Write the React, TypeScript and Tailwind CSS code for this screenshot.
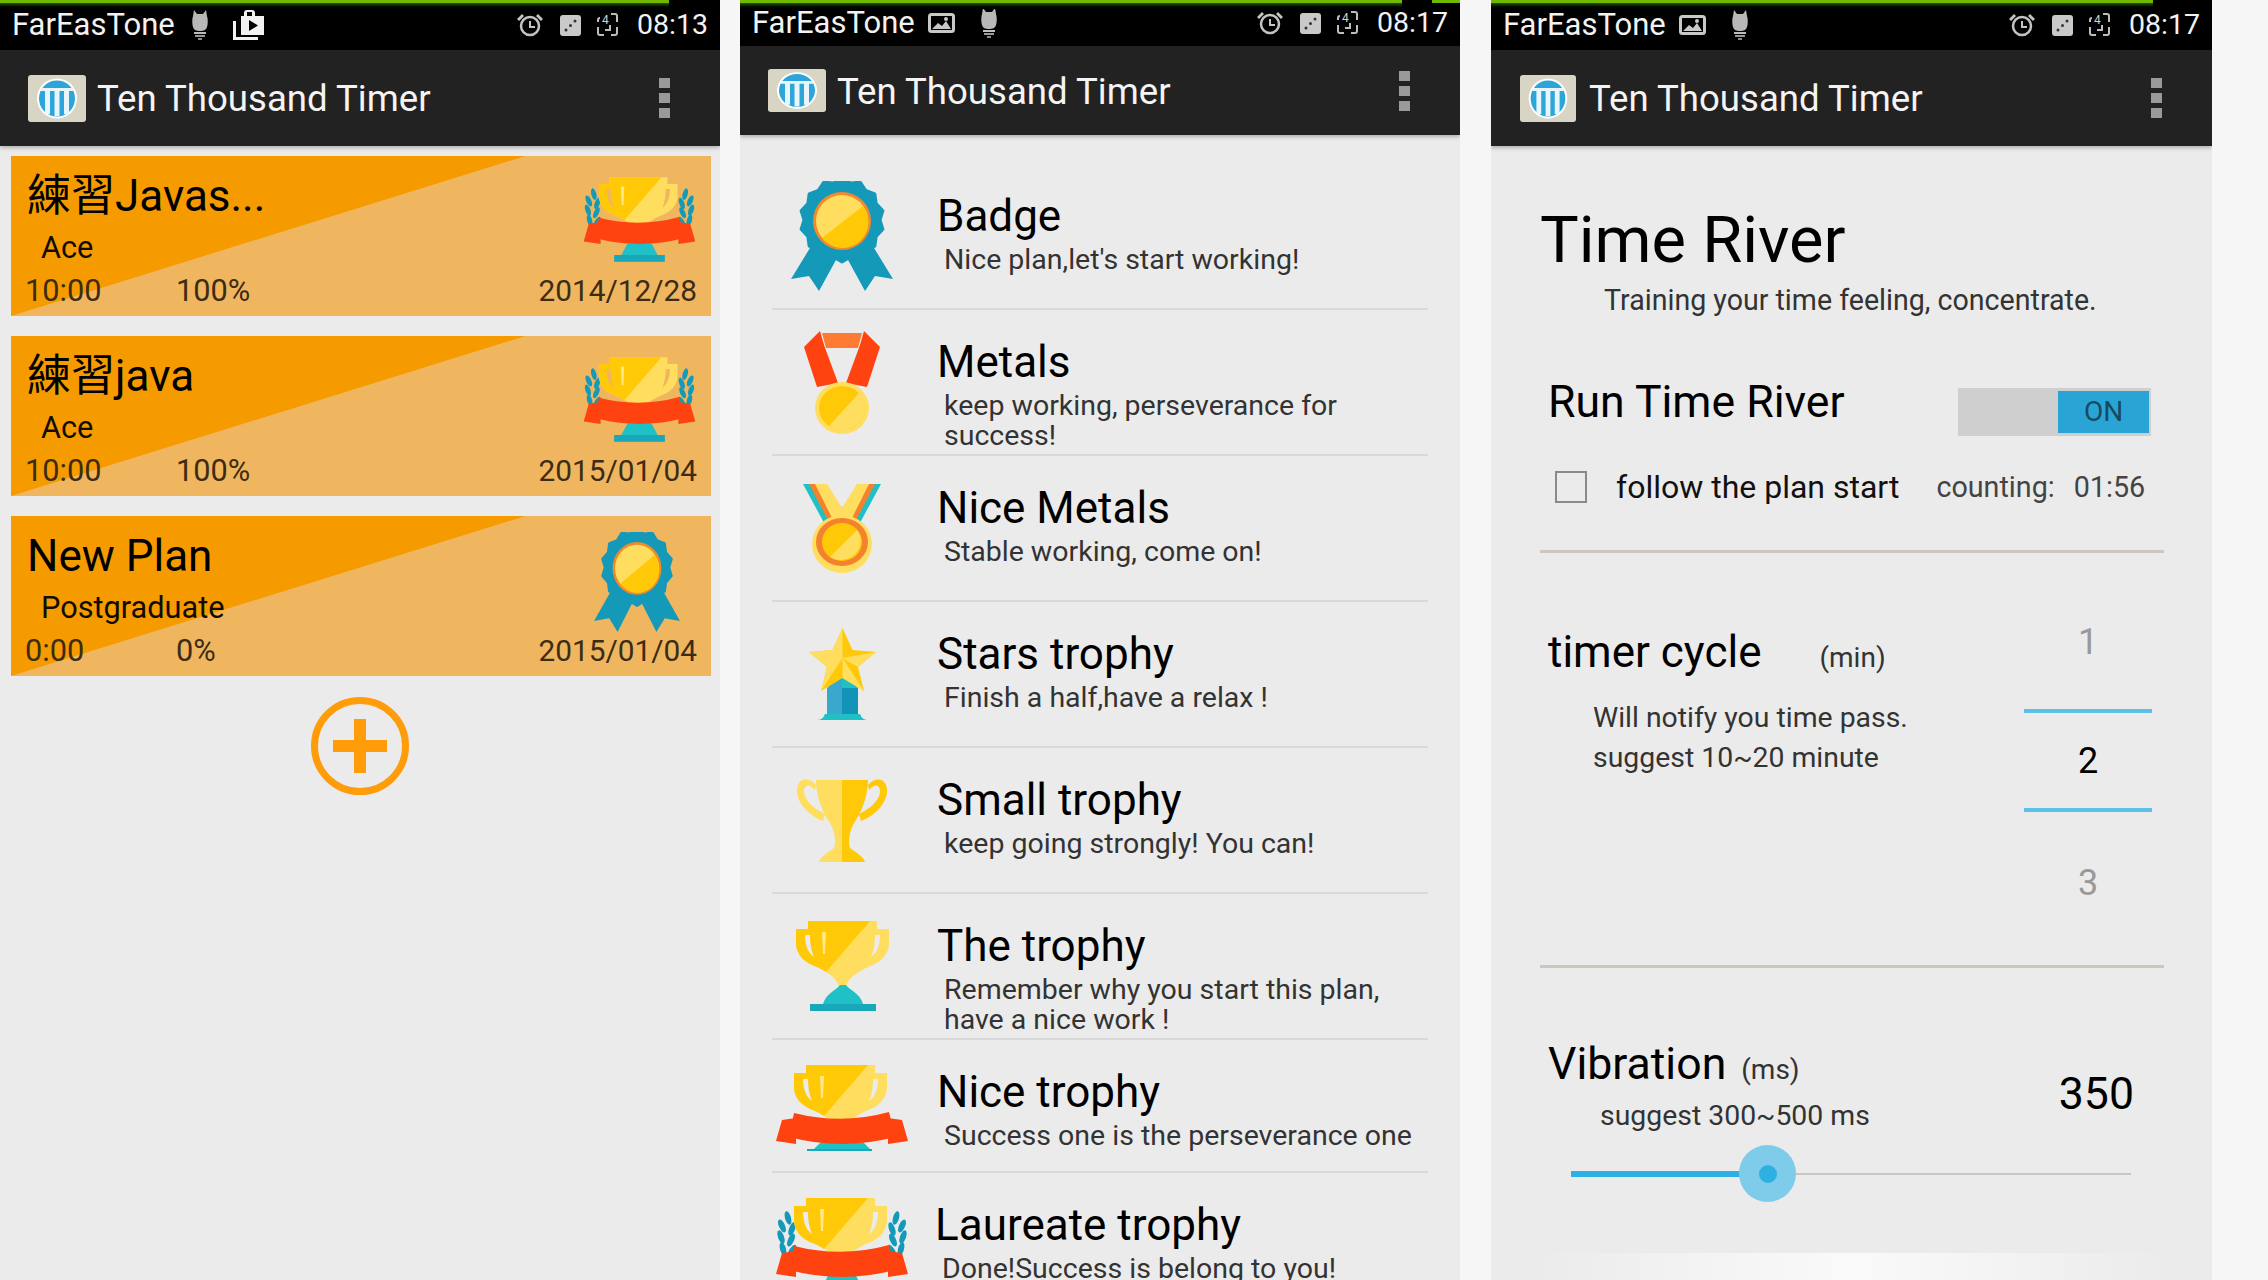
import { ReactNode } from "react";

const ROBOTO = "font-['Roboto','Noto_Sans_CJK_TC',sans-serif]";

function Bulb({ className = "" }: { className?: string }) {
  return (
    <svg viewBox="0 0 18 30" width="18" height="30" className={className}>
      <path d="M3 0l3 4h6l3-4 1 6c1 3 1 8 0 11-1 3-3 4-7 4s-6-1-7-4C1 14 1 9 2 6z" fill="#b8b8b8" />
      <rect x="3" y="22" width="12" height="2" fill="#bdbdbd" />
      <rect x="4" y="25" width="10" height="2" fill="#9a9a9a" />
      <rect x="7" y="28" width="4" height="2" fill="#8a8a8a" />
    </svg>
  );
}

function BagPlay({ className = "" }: { className?: string }) {
  return (
    <svg viewBox="0 0 31 30" width="31" height="30" className={className}>
      <path d="M8 6h3V3a3 3 0 013-3h5a3 3 0 013 3v3h9v19H8z" fill="#f2f2f2" />
      <rect x="14" y="2" width="5" height="4" fill="#000" />
      <path d="M16 10l9 5.5-9 5.500z" fill="#000" />
      <path d="M0 11h3v16h22v3H0z" fill="#f2f2f2" />
    </svg>
  );
}

function ImageIcon({ className = "" }: { className?: string }) {
  return (
    <svg viewBox="0 0 27 20" width="27" height="20" className={className}>
      <rect x="1.500" y="1.500" width="24" height="17" rx="2" fill="none" stroke="#c8c8c8" strokeWidth="3" />
      <path d="M4 16l6-6 4 3 4-5 5 8z" fill="#c8c8c8" />
      <circle cx="18" cy="6" r="2" fill="#c8c8c8" />
    </svg>
  );
}

function Alarm() {
  return (
    <svg viewBox="0 0 28 24" width="28" height="24">
      <circle cx="14" cy="13" r="9" fill="none" stroke="#c4c4c4" strokeWidth="2.500" />
      <path d="M14 8v6h5" fill="none" stroke="#c4c4c4" strokeWidth="2" />
      <path d="M1 6l5-5 2 2-5 5zM27 6l-5-5-2 2 5 5z" fill="#c4c4c4" />
    </svg>
  );
}

function Dice() {
  return (
    <svg viewBox="0 0 21 21" width="21" height="21">
      <rect width="21" height="21" rx="3" fill="#c9c9c9" />
      <circle cx="6" cy="15" r="1.500" fill="#333" />
      <circle cx="10.500" cy="10.500" r="1.500" fill="#333" />
      <circle cx="15" cy="6" r="1.500" fill="#333" />
    </svg>
  );
}

function Sync() {
  return (
    <svg viewBox="0 0 21 24" width="21" height="24">
      <path d="M1 9V7a2 2 0 012-2M20 9V3a2 2 0 00-2-2h-4M1 14v6a2 2 0 002 2h4M20 14v6a2 2 0 01-2 2h-4" fill="none" stroke="#bdbdbd" strokeWidth="2" />
      <path d="M13 12v5h-5" fill="none" stroke="#bdbdbd" strokeWidth="2" />
      <text x="5" y="11" fontSize="12" fill="#d0d0d0" fontFamily="Roboto">4</text>
    </svg>
  );
}

function StatusBar({ time, gap, height, first, bar, extra }: { time: string; gap: string; height: string; first: ReactNode; bar: string; extra?: boolean }) {
  return (
    <div className={`relative flex items-center bg-black pl-[12px] ${height}`}>
      <div className={`absolute left-0 top-0 h-[3px] bg-[#6fb900] ${bar}`} />
      <div className={`absolute left-0 top-[3px] h-[6px] bg-gradient-to-b from-[#2f4f00] to-black ${bar}`} />
      {extra && <div className="absolute right-0 top-0 h-[3px] w-[28px] bg-[#6fb900]" />}
      <span className="text-[31px] leading-[36px] text-[#f2f2f2]">FarEasTone</span>
      {first}
      <div className={`ml-auto flex items-center pr-[12px] ${gap}`}>
        <Alarm />
        <Dice />
        <Sync />
        <span className="ml-[3px] text-[28.500px] leading-[36px] text-[#f2f2f2]">{time}</span>
      </div>
    </div>
  );
}

function Logo({ width, height }: { width: number; height: number }) {
  return (
    <svg viewBox="0 0 58 47" width={width} height={height} preserveAspectRatio="none" className="shrink-0">
      <rect width="58" height="47" rx="3" fill="#d8d5c5" />
      <ellipse cx="29" cy="23.500" rx="20" ry="20" fill="#fff" />
      <ellipse cx="29" cy="23.500" rx="18" ry="18" fill="#2da5d8" />
      <path d="M13 13h32v3H13zM17 16h5v23h-5zM26.500 16h5v25h-5zM36 16h5v23h-5z" fill="#e8f6fb" />
    </svg>
  );
}

function ActionBar({ height, pad, logoW, logoH, gap }: { height: string; pad: string; logoW: number; logoH: number; gap: string }) {
  return (
    <div className={`relative z-10 flex items-center bg-[#222222] shadow-[0_2px_4px_rgba(0,0,0,0.25)] ${height} ${pad} pr-[50px]`}>
      <Logo width={logoW} height={logoH} />
      <span className={`pt-[2px] text-[36.600px] leading-[44px] text-[#f4f4f4] ${gap}`}>Ten Thousand Timer</span>
      <div className="ml-auto flex flex-col gap-[5px]">
        <div className="h-[10px] w-[11px] bg-[#9a9a9a]" />
        <div className="h-[10px] w-[11px] bg-[#9a9a9a]" />
        <div className="h-[10px] w-[11px] bg-[#9a9a9a]" />
      </div>
    </div>
  );
}

const LIGHT = "#ffdd5e";
const DARK = "#ffc908";
const TEAL = "#1fc0c6";
const BLUE = "#149ab8";
const RED = "#ff4310";

function Cup({ hole }: { hole: string }) {
  return (
    <g>
      <path d="M12 0H81V8H93V22C93 34 84 42 72 46C64 50 52 56 50 66H43C41 56 29 50 21 46C9 42 0 34 0 22V8H12Z" fill={LIGHT} />
      <path d="M12 0H74L30 51C27 49 24 47 21 46C9 42 0 34 0 22V8H12Z" fill={DARK} />
      <path d="M9 14h5c0 8 1 15 4 22C12 32 9 24 9 14zM84 14h-5c0 8-1 15-4 22C81 32 84 24 84 14z" fill={hole} />
      <path d="M26 11h4l-1 22h-2z" fill="#ffe78c" />
    </g>
  );
}

function Ribbon() {
  return (
    <g>
      <path d="M6 55L20 53 20 79 0 76zM126 55L112 53 112 79 132 76z" fill={RED} />
      <path d="M18 48Q66 60 113 47L119 72Q66 86 13 72z" fill={RED} />
    </g>
  );
}

function Laurel({ flip }: { flip?: boolean }) {
  const leaves = [
    [14, 20, -15],
    [8, 28, -25],
    [18, 31, 20],
    [7, 39, -20],
    [17, 42, 25],
    [9, 51, -15],
    [18, 53, 30],
  ];
  return (
    <g transform={flip ? "translate(136 0) scale(-1 1)" : undefined}>
      {leaves.map(([x, y, r], i) => (
        <ellipse key={i} cx={x} cy={y} rx="3" ry="7" fill={BLUE} transform={`rotate(${r} ${x} ${y})`} />
      ))}
    </g>
  );
}

function LaureateTrophy({ hole, width, height, className = "" }: { hole: string; width: number; height: number; className?: string }) {
  return (
    <svg viewBox="0 0 136 100" width={width} height={height} className={`shrink-0 ${className}`}>
      <Laurel />
      <Laurel flip />
      <g transform="translate(20 0)">
        <Cup hole={hole} />
      </g>
      <path d="M54 78h28l8 15H46z" fill={TEAL} />
      <rect x="38" y="92" width="60" height="8" fill="#18a8ba" />
      <g transform="translate(2 0)">
        <Ribbon />
      </g>
    </svg>
  );
}

function NiceTrophy() {
  return (
    <svg viewBox="0 0 132 86" width="132" height="86" className="mt-[4px] shrink-0">
      <g transform="translate(18 0)">
        <Cup hole="#ebebeb" />
      </g>
      <path d="M50 72h32l12 12H38z" fill={TEAL} />
      <rect x="31" y="84" width="65" height="2" fill="#18a8ba" />
      <Ribbon />
    </svg>
  );
}

function TheTrophy() {
  return (
    <svg viewBox="0 0 93 90" width="93" height="90" className="shrink-0">
      <Cup hole="#ebebeb" />
      <path d="M44 64h6c3 5 14 8 17 19H27c3-11 14-14 17-19z" fill={TEAL} />
      <rect x="14" y="83" width="66" height="7" fill="#18a8ba" />
    </svg>
  );
}

function scallop(cx: number, cy: number, r: number, n: number) {
  let d = "";
  for (let i = 0; i < n * 2; i++) {
    const a = (Math.PI * i) / n;
    const rr = i % 2 ? r - 4 : r;
    d += `${i ? "L" : "M"}${(cx + rr * Math.sin(a)).toFixed(1)} ${(cy - rr * Math.cos(a)).toFixed(1)}`;
  }
  return d + "Z";
}

function Badge({ width, height, className = "" }: { width: number; height: number; className?: string }) {
  return (
    <svg viewBox="0 0 102 110" width={width} height={height} preserveAspectRatio="none" className={`shrink-0 ${className}`}>
      <path d="M22 62L0 98l18-3 10 15 23-42 23 42 10-15 18 3-22-36z" fill={BLUE} />
      <path d={scallop(51, 39, 42, 14)} fill={BLUE} stroke={BLUE} strokeWidth="3" strokeLinejoin="round" />
      <circle cx="51" cy="40" r="29" fill="#f08a2c" />
      <circle cx="51" cy="40" r="26" fill={LIGHT} />
      <path d="M72 25A26 26 0 0131 57z" fill={DARK} />
    </svg>
  );
}

function Metal() {
  return (
    <svg viewBox="0 0 76 103" width="76" height="103" className="shrink-0">
      <path d="M18 2h40l-4 15H22z" fill="#ff7a32" />
      <path d="M16 0L0 16 13 56 34 52 20 14zM60 0L76 16 63 56 42 52 56 14z" fill={RED} />
      <ellipse cx="38" cy="77" rx="27" ry="26" fill={LIGHT} />
      <ellipse cx="38" cy="77" rx="23" ry="22" fill={DARK} />
      <path d="M55 62A23 22 0 0125 95z" fill={LIGHT} />
    </svg>
  );
}

function NiceMetal() {
  return (
    <svg viewBox="0 0 78 89" width="78" height="89" className="shrink-0">
      <path d="M0 0h16l23 24L62 0h16L52 48H26z" fill={TEAL} />
      <path d="M6 0h14l19 24L58 0h14L48 46H30z" fill="#f4812e" />
      <path d="M12 0h12l15 24L54 0h12L44 44H34z" fill={LIGHT} />
      <ellipse cx="39" cy="60" rx="30" ry="29" fill={LIGHT} />
      <ellipse cx="39" cy="58" rx="26" ry="24" fill="#f4812e" />
      <ellipse cx="39" cy="58" rx="20" ry="19" fill={DARK} />
      <path d="M54 46A20 19 0 0127 73z" fill={LIGHT} />
    </svg>
  );
}

function Star() {
  return (
    <svg viewBox="0 0 67 92" width="67" height="92" className="shrink-0">
      <path d="M18 60h31v27H18z" fill="#1294b8" />
      <path d="M18 60l10-10h5v37H18z" fill="#3aa8cc" />
      <path d="M33 50h6l10 10H33z" fill={TEAL} />
      <path d="M8 92q6 0 8-6h35q2 6 8 6z" fill={TEAL} />
      <path d="M33.500 0l10 22 23.500 2-18 15 6 24-21.500-13-21.500 13 6-24-18-15 23.500-2z" fill={DARK} />
      <path d="M33.500 0v30L12 63l6-24L0 24l23.500-2zM33.500 30L67 24l-18 15zM33.500 30v20l21.500 13z" fill={LIGHT} />
    </svg>
  );
}

function SmallTrophy() {
  return (
    <svg viewBox="0 0 92 86" width="92" height="86" className="shrink-0">
      <path d="M20 8C14 0 2 0 1 12c-1 12 10 26 26 32l2-7C16 31 7 21 8 13c1-6 6-6 11 0z" fill={LIGHT} />
      <path d="M72 8c6-8 18-8 19 4 1 12-10 26-26 32l-2-7c13-6 22-16 21-24-1-6-6-6-11 0z" fill={DARK} />
      <path d="M20 3h26v82H23c2-6 10-10 15-14 2-5 1-15-3-23C27 36 20 20 20 3z" fill={LIGHT} />
      <path d="M46 3h26c0 17-7 33-15 45-4 8-5 18-3 23 5 4 13 8 15 14H46z" fill={DARK} />
    </svg>
  );
}

function Card({ title, level, time, percent, date, icon }: { title: string; level: string; time: string; percent: string; date: string; icon: ReactNode }) {
  return (
    <div className="relative flex h-[160px] bg-[#f0b65f]">
      <div className="absolute inset-0 bg-[#f59b00] [clip-path:polygon(0_0,73.500%_0,0_100%)]" />
      <div className="relative flex flex-1 flex-col pl-[14px] pt-[14px]">
        <div className="pl-[2px] text-[44px] leading-[52px] text-black">{title}</div>
        <div className="mt-[9px] pl-[16px] text-[30.700px] leading-[34px] text-[#120b00]">{level}</div>
        <div className="mt-[9px] flex text-[30.700px] leading-[34px] text-[#3d2c14]">
          <span className="w-[151px]">{time}</span>
          <span>{percent}</span>
        </div>
      </div>
      <div className="relative flex flex-col items-end pb-[8px] pr-[14px]">
        {icon}
        <span className="mt-auto text-[29.800px] leading-[34px] text-[#3d2c14]">{date}</span>
      </div>
    </div>
  );
}

const achievements = [
  { title: "Badge", desc: "Nice plan,let's start working!", icon: <Badge width={102} height={110} />, h: "h-[147px]", top: "pt-[29px]" },
  { title: "Metals", desc: "keep working, perseverance for success!", icon: <Metal />, h: "h-[146px]" },
  { title: "Nice Metals", desc: "Stable working, come on!", icon: <NiceMetal />, h: "h-[146px]" },
  { title: "Stars trophy", desc: "Finish a half,have a relax !", icon: <Star />, h: "h-[146px]" },
  { title: "Small trophy", desc: "keep going strongly! You can!", icon: <SmallTrophy />, h: "h-[146px]" },
  { title: "The trophy", desc: "Remember why you start this plan, have a nice work !", icon: <TheTrophy />, h: "h-[146px]" },
  { title: "Nice trophy", desc: "Success one is the perseverance one", icon: <NiceTrophy />, h: "h-[133px]" },
];

function AchievementRow({ title, desc, icon, h, top = "pt-[28px]", left = "pl-[25px]", last }: { title: string; desc: string; icon: ReactNode; h: string; top?: string; left?: string; last?: boolean }) {
  return (
    <div className={`flex ${h} ${last ? "items-start" : "items-center border-b-2 border-[#d9d9d9]"}`}>
      <div className="flex w-[140px] justify-center">{icon}</div>
      <div className={`self-start ${left} ${top}`}>
        <div className="text-[44px] leading-[48px] text-black">{title}</div>
        <div className="mt-[5px] w-[490px] pl-[7px] text-[28.500px] leading-[30px] text-[#333333]">{desc}</div>
      </div>
    </div>
  );
}

function Panel1() {
  return (
    <div className="h-full w-[720px] shrink-0 overflow-hidden bg-[#ebebeb]">
      <StatusBar
        time="08:13"
        height="h-[50px]"
        gap="gap-[16px]"
        bar="w-[669px]"
        first={
          <>
            <Bulb className="ml-[16px]" />
            <BagPlay className="ml-[24px]" />
          </>
        }
      />
      <ActionBar height="h-[96px]" pad="pl-[28px]" logoW={58} logoH={47} gap="ml-[11px]" />
      <div className="flex flex-col gap-[20px] pl-[11px] pr-[9px] pt-[10px]">
        <Card title="練習Javas..." level="Ace" time="10:00" percent="100%" date="2014/12/28" icon={<LaureateTrophy hole="#f0b65f" width={115} height={85} className="mt-[21px]" />} />
        <Card title="練習java" level="Ace" time="10:00" percent="100%" date="2015/01/04" icon={<LaureateTrophy hole="#f0b65f" width={115} height={85} className="mt-[21px]" />} />
        <Card title="New Plan" level="Postgraduate" time="0:00" percent="0%" date="2015/01/04" icon={<Badge width={86} height={100} className="mr-[17px] mt-[16px]" />} />
      </div>
      <div className="mt-[21px] flex justify-center">
        <div className="flex h-[98px] w-[98px] items-center justify-center rounded-full border-[7px] border-[#ff9c0a]">
          <svg viewBox="0 0 54 54" width="54" height="54">
            <path d="M21 0h12v21h21v12H33v21H21V33H0V21h21z" fill="#ff9c0a" />
          </svg>
        </div>
      </div>
    </div>
  );
}

function Panel2() {
  return (
    <div className="ml-[20px] h-full w-[720px] shrink-0 overflow-hidden bg-[#ebebeb]">
      <StatusBar
        time="08:17"
        height="h-[46px]"
        gap="gap-[16px]"
        bar="w-[662px]"
        extra
        first={
          <>
            <ImageIcon className="ml-[13px]" />
            <Bulb className="ml-[25px]" />
          </>
        }
      />
      <ActionBar height="h-[89px]" pad="pl-[28px]" logoW={58} logoH={43} gap="ml-[11px]" />
      <div className="px-[32px] pt-[28px]">
        {achievements.map((a) => (
          <AchievementRow key={a.title} {...a} />
        ))}
        <AchievementRow
          last
          title="Laureate trophy"
          desc="Done!Success is belong to you!"
          h="h-[140px]"
          left="pl-[23px]"
          icon={<LaureateTrophy hole="#ebebeb" width={136} height={100} className="mt-[25px]" />}
        />
      </div>
    </div>
  );
}

function Panel3() {
  return (
    <div className="relative ml-[31px] h-full w-[721px] shrink-0 overflow-hidden bg-[#ebebeb]">
      <StatusBar
        time="08:17"
        height="h-[50px]"
        gap="gap-[16px]"
        bar="w-[662px]"
        first={
          <>
            <ImageIcon className="ml-[13px]" />
            <Bulb className="ml-[25px]" />
          </>
        }
      />
      <ActionBar height="h-[96px]" pad="pl-[29px]" logoW={56} logoH={47} gap="ml-[13px]" />
      <div className="pl-[49px]">
        <div className="w-[624px]">
          <div className="mt-[57px] text-[65px] leading-[74px] text-black">Time River</div>
          <div className="mt-[5px] pl-[64px] text-[28.600px] leading-[36px] text-[#333333]">Training your time feeling, concentrate.</div>
          <div className="mt-[59px] flex justify-between pl-[8px] pr-[13px]">
            <span className="text-[44.600px] leading-[50px] text-black">Run Time River</span>
            <div className="mt-[11px] flex h-[48px] w-[193px] justify-end bg-[#cfcfcf] py-[3px] pr-[2px]">
              <div className="flex w-[91px] items-center justify-center bg-[#2aa4d4] text-[28px] text-[#174a5e]">ON</div>
            </div>
          </div>
          <div className="mt-[29px] flex h-[44px] items-center pl-[15px]">
            <div className="h-[32px] w-[32px] border-2 border-[#8a8a8a]" />
            <span className="ml-[29px] text-[32px] leading-[44px] text-[#111111]">follow the plan start</span>
            <span className="ml-[37px] text-[28.700px] leading-[44px] text-[#444444]">counting:</span>
            <span className="ml-[19px] text-[28.700px] leading-[44px] text-[#444444]">01:56</span>
          </div>
          <div className="mt-[41px] h-[3px] bg-[#cdc7be]" />

          <div className="flex h-[412px] justify-between pr-[12px]">
            <div className="pl-[8px] pt-[74px]">
              <div className="flex items-baseline">
                <span className="text-[44px] leading-[50px] text-black">timer cycle</span>
                <span className="ml-[58px] text-[28px] text-[#333333]">(min)</span>
              </div>
              <div className="mt-[19px] pl-[45px] text-[28.400px] leading-[40px] text-[#333333]">
                <div>Will notify you time pass.</div>
                <div>suggest 10~20 minute</div>
              </div>
            </div>
            <div className="flex w-[128px] flex-col items-center pt-[64px] text-[36px] leading-[50px]">
              <span className="text-[#999999]">1</span>
              <div className="mt-[42px] h-[4px] w-full bg-[#5cc1e6]" />
              <span className="flex h-[95px] items-center text-black">2</span>
              <div className="h-[4px] w-full bg-[#5cc1e6]" />
              <span className="mt-[46px] text-[#999999]">3</span>
            </div>
          </div>
          <div className="h-[3px] bg-[#cdc7be]" />

          <div className="mt-[71px] flex justify-between pr-[30px]">
            <div className="pl-[8px]">
              <div className="flex items-baseline">
                <span className="text-[44.600px] leading-[50px] text-black">Vibration</span>
                <span className="ml-[15px] text-[28px] text-[#333333]">(ms)</span>
              </div>
              <div className="mt-[5px] pl-[52px] text-[28.400px] leading-[40px] text-[#333333]">suggest 300~500 ms</div>
            </div>
            <span className="mt-[30px] text-[44.600px] leading-[50px] text-black">350</span>
          </div>
          <div className="relative ml-[31px] mt-[9px] flex h-[57px] w-[560px] items-center">
            <div className="h-[6px] w-[196px] bg-[#2fb0e3]" />
            <div className="h-[2px] flex-1 bg-[#c6c6c6]" />
            <div className="absolute left-[168px] top-0 flex h-[57px] w-[57px] items-center justify-center rounded-full bg-[#7fcbea]">
              <div className="h-[18px] w-[18px] rounded-full bg-[#2fb0e3]" />
            </div>
          </div>
        </div>
      </div>
      <div className="absolute bottom-0 left-[40px] right-[40px] h-[27px] bg-gradient-to-r from-[#ebebeb] via-[#fafafa] to-[#ebebeb]" />
    </div>
  );
}

export default function App() {
  return (
    <div className={`flex h-[1280px] w-[2268px] overflow-hidden bg-[#f6f6f6] ${ROBOTO}`}>
      <Panel1 />
      <Panel2 />
      <Panel3 />
    </div>
  );
}
